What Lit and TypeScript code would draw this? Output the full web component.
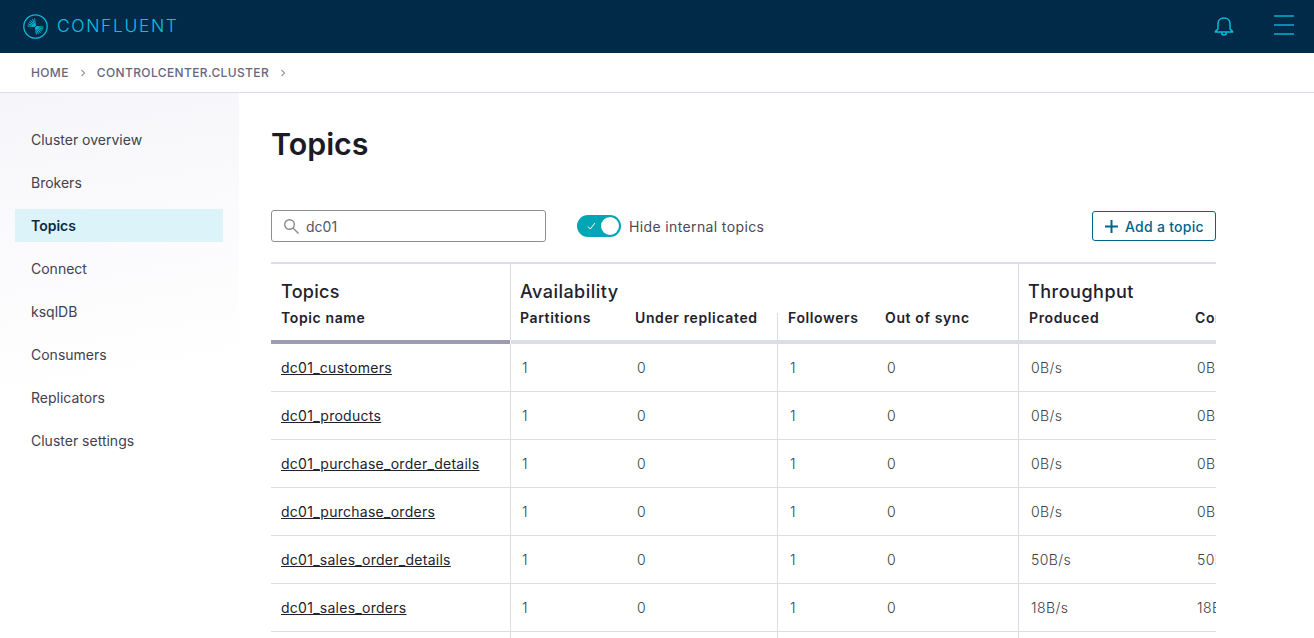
import { LitElement, html, css, svg } from "lit";
import { customElement } from "lit/decorators.js";

const NAV = ["Cluster overview", "Brokers", "Topics", "Connect", "ksqlDB", "Consumers", "Replicators", "Cluster settings"];
const ROWS = [
  ["dc01_customers", "0B/s", "0B/s"],
  ["dc01_products", "0B/s", "0B/s"],
  ["dc01_purchase_order_details", "0B/s", "0B/s"],
  ["dc01_purchase_orders", "0B/s", "0B/s"],
  ["dc01_sales_order_details", "50B/s", "50B/s"],
  ["dc01_sales_orders", "18B/s", "18B/s"],
  ["", "", ""],
];

const rays = [4, 20, 36, 52, 68, 84, 184, 200, 216, 232, 248, 264];

@customElement("app-root")
export class AppRoot extends LitElement {
  static styles = css`
    :host { display: block; height: 638px; overflow: hidden; font-family: Inter, "Liberation Sans", sans-serif; background: #fff; }
    .top { height: 53px; background: #002a47; display: flex; align-items: center; padding: 0 20px 0 23px; color: #00bcdc; }
    .logo { display: flex; align-items: center; gap: 9px; flex: 1; }
    .word { font-size: 17.5px; font-weight: 300; letter-spacing: 1.6px; line-height: 1; color: #00c4e6; margin-bottom: 2px; }
    .bell { margin-right: 40px; display: block; }
    .menu { display: block; margin-bottom: 4px; }
    .crumbs { height: 39px; border-bottom: 1px solid #dcdce6; display: flex; align-items: center; padding-left: 31px; gap: 7px; font-size: 12px; font-weight: 500; letter-spacing: .37px; color: #66667f; }
    .crumbs svg { display: block; }
    .body { display: flex; height: 545px; }
    .side { width: 239px; flex: none; box-sizing: border-box; padding: 30px 16px 0 15px; display: flex; flex-direction: column; gap: 10px; background: linear-gradient(170deg, #f6f6fa 0, #fbfbfd 170px, #fff 310px); }
    .item { height: 33px; display: flex; align-items: center; padding-left: 16px; font-size: 14px; letter-spacing: 0; color: #41414f; }
    .item.on { background: #dcf3f9; color: #0a2a45; font-weight: 600; }
    .main { width: 945px; margin-left: 32px; min-width: 0; }
    h1 { margin: 0 0 48px; font-size: 30.4px; line-height: 36px; height: 36px; font-weight: 600; color: #1b1b26; padding-top: 33px; }
    .tools { display: flex; align-items: center; height: 32px; }
    .search { width: 275px; height: 32px; box-sizing: border-box; border: 1px solid #8e8e99; border-radius: 3px; display: flex; align-items: center; gap: 6px; padding-left: 11px; font-size: 14px; color: #55555f; }
    .toggle { margin-left: 31px; width: 44px; height: 22px; border-radius: 11px; background: #00a6b4; display: flex; align-items: center; justify-content: space-between; padding: 0 2px 0 10px; box-sizing: border-box; }
    .knob { width: 18px; height: 18px; border-radius: 50%; background: #fff; }
    .tlabel { margin-left: 8px; font-size: 14px; letter-spacing: .37px; color: #4a4a58; flex: 1; }
    .add { width: 124px; height: 30px; box-sizing: border-box; border: 1px solid #00648c; border-radius: 3px; display: flex; align-items: center; gap: 7px; padding-left: 12px; font-size: 14px; font-weight: 500; letter-spacing: .27px; color: #00648c; }
    .wrap { margin-top: 20px; overflow: hidden; border-top: 2px solid #dcdce6; }
    .grid { display: grid; width: 1100px; grid-template-columns: 240px 115px 152px 98px 143px 166px 186px; }
    .g, .s, .c { box-sizing: border-box; }
    .g { height: 49px; padding: 17px 0 0 9px; font-size: 18px; line-height: 22px; font-weight: 500; color: #22222c; letter-spacing: .47px; }
    .g.first { padding-left: 10px; grid-column: 1; border-right: 1px solid #dcdce6; letter-spacing: .3px; }
    .g.av { grid-column: 2 / span 4; border-right: 1px solid #dcdce6; }
    .g.th { grid-column: 6 / span 2; letter-spacing: .5px; }
    .s { padding: 0 0 0 9px; margin-top: -2px; height: 29px; font-size: 14px; line-height: 14px; font-weight: 600; color: #22222c; letter-spacing: .62px; white-space: nowrap; }
    .s.first, .s.p { padding-left: 10px; }
    .s.line, .c.line { border-right: 1px solid #dcdce6; }
    .s.inner { height: 27px; margin-top: 0; line-height: 10px; }
    .bar { height: 4px; background: #dcdce6; }
    .bar.dark { background: #9c9cb0; width: 239px; }
    .c { height: 48px; border-bottom: 1px solid #dcdce6; display: flex; align-items: center; padding-left: 11px; font-size: 14px; font-weight: 300; color: #3c3c44; letter-spacing: .42px; white-space: nowrap; }
    .c.name { padding-left: 10px; font-weight: 400; }
    .c.p { padding-left: 12px; }
    .c a { color: #22222c; text-decoration: underline; letter-spacing: .27px; }
    .bar.full { grid-column: 2 / span 6; }
  `;

  render() {
    return html`
      <div class="top">
        <div class="logo">
          <svg width="25" height="25" viewBox="0 0 25 25" fill="none" stroke="currentColor">
            <circle cx="12.5" cy="12.5" r="11.7" stroke-width="1.3"></circle>
            ${rays.map((a) => {
              const r = (a * Math.PI) / 180;
              const len = a % 4 === 0 ? 8 : 6.5;
              return svg`<line x1=${12.5 + Math.cos(r) * 0.8} y1=${12.5 + Math.sin(r) * 0.8} x2=${12.5 + Math.cos(r) * len} y2=${12.5 + Math.sin(r) * len} stroke-width="1"></line>`;
            })}
          </svg>
          <span class="word">CONFLUENT</span>
        </div>
        <svg class="bell" width="20" height="20" viewBox="0 0 20 20" fill="none" stroke="currentColor" stroke-width="1.500">
          <path d="M1.500 14.800c0-.6.3-1 1-1.300.8-.4 1.500-1 1.500-2.500V6.500C4 3.300 6.500 1 10 1s6 2.300 6 5.500V11c0 1.500.7 2.100 1.500 2.500.7.3 1 .7 1 1.300v.2h-17z"></path>
          <path d="M7.500 15.500a2.500 2.500 0 0 0 5 0"></path>
        </svg>
        <svg class="menu" width="20" height="20" viewBox="0 0 20 20" stroke="currentColor" stroke-width="1.400">
          <line x1="0" y1="1" x2="20" y2="1"></line>
          <line x1="0" y1="10" x2="20" y2="10"></line>
          <line x1="0" y1="19" x2="20" y2="19"></line>
        </svg>
      </div>
      <div class="crumbs">
        <span>HOME</span>${this.chev()}<span>CONTROLCENTER.CLUSTER</span>${this.chev()}
      </div>
      <div class="body">
        <nav class="side">
          ${NAV.map((n) => html`<div class="item ${n === "Topics" ? "on" : ""}">${n}</div>`)}
        </nav>
        <div class="main">
          <h1>Topics</h1>
          <div class="tools">
            <div class="search">
              <svg width="17" height="17" viewBox="0 0 17 17" fill="none" stroke="#8a8a94" stroke-width="1.400">
                <circle cx="6.500" cy="6.500" r="4.800"></circle>
                <line x1="10" y1="10" x2="15.500" y2="15.500"></line>
              </svg>
              dc01
            </div>
            <div class="toggle">
              <svg width="9" height="8" viewBox="0 0 9 8" fill="none" stroke="#fff" stroke-width="1"><path d="M1 4.500 3.300 7 8 1"></path></svg>
              <div class="knob"></div>
            </div>
            <div class="tlabel">Hide internal topics</div>
            <div class="add">
              <svg width="13" height="13" viewBox="0 0 13 13" stroke="currentColor" stroke-width="2"><line x1="6.500" y1="0" x2="6.500" y2="13"></line><line x1="0" y1="6.500" x2="13" y2="6.500"></line></svg>
              Add a topic
            </div>
          </div>
          <div class="wrap">
            <div class="grid">
              <div class="g first">Topics</div>
              <div class="g av">Availability</div>
              <div class="g th">Throughput</div>
              <div class="s first line">Topic name</div>
              <div class="s">Partitions</div>
              <div class="s line inner">Under replicated</div>
              <div class="s p">Followers</div>
              <div class="s line">Out of sync</div>
              <div class="s p">Produced</div>
              <div class="s p">Consumed</div>
              <div class="bar dark"></div>
              <div class="bar full"></div>
              ${ROWS.map(
                (r) => html`
                  <div class="c name line"><a>${r[0]}</a></div>
                  <div class="c">${r[0] ? "1" : ""}</div>
                  <div class="c line">${r[0] ? "0" : ""}</div>
                  <div class="c p">${r[0] ? "1" : ""}</div>
                  <div class="c line">${r[0] ? "0" : ""}</div>
                  <div class="c p">${r[1]}</div>
                  <div class="c p">${r[2]}</div>
                `
              )}
            </div>
          </div>
        </div>
      </div>
    `;
  }

  chev() {
    return html`<svg width="14" height="14" viewBox="0 0 14 14" fill="none" stroke="#9a9aad" stroke-width="1.200"><path d="M5.500 4 8.500 7 5.500 10"></path></svg>`;
  }
}
